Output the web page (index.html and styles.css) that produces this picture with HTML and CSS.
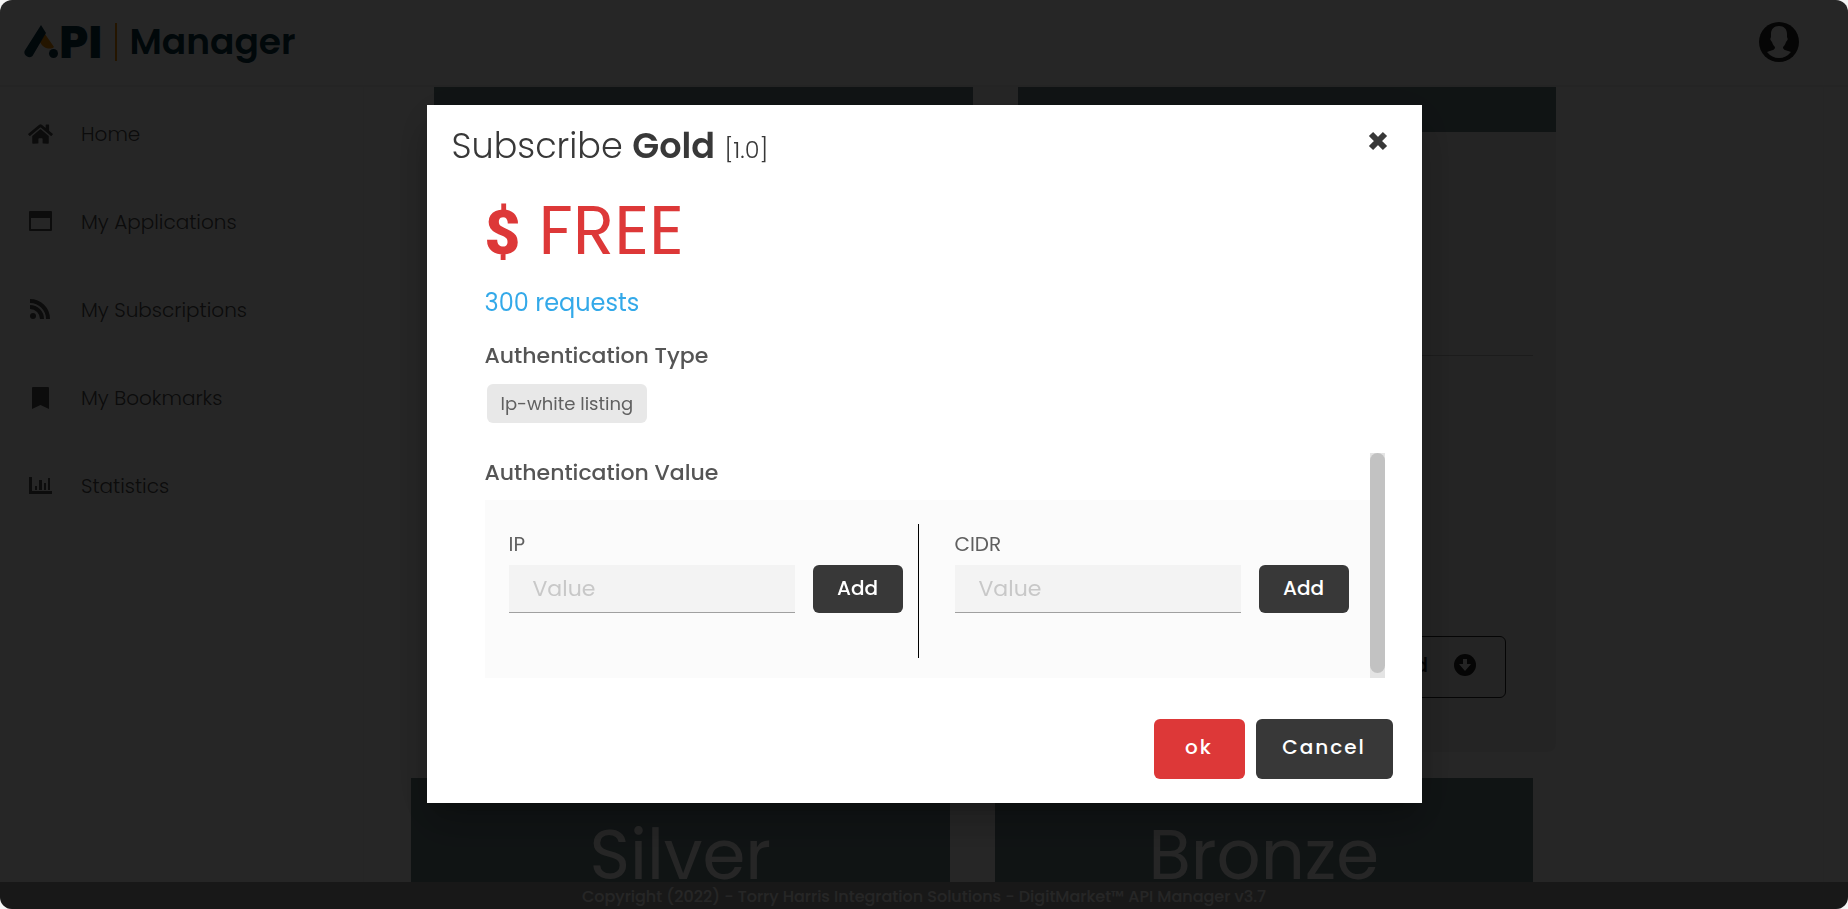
FILE: index.html
```
<!DOCTYPE html>
<html lang="en">
<head>
    <meta charset="UTF-8">
    <meta name="viewport" content="width=device-width, initial-scale=1.0">
    <title>API Manager</title>
    <link rel="stylesheet" href="styles.css">
</head>
<body>
    <div class="page">
        <header class="topbar">
            <a class="logo" href="#">
                <svg class="logo-mark" viewBox="0 0 36 36">
                    <path d="M22 10 L31 23 C28 26 20 25 17 18 Z" fill="#f08a00"/>
                    <path d="M18 1 L23 9 L9.500 32 A5 5 0 0 1 1.500 27 Z" fill="#0c3548"/>
                    <circle cx="30.500" cy="29.500" r="4.500" fill="#0c3548"/>
                </svg>
                <span class="logo-api">PI</span>
                <span class="logo-line"></span>
                <span class="logo-name">Manager</span>
            </a>
            <a class="avatar" href="#" aria-label="Account">
                <svg viewBox="0 0 40 40">
                    <circle cx="20" cy="20" r="20" fill="#222"/>
                    <path d="M20 4 C25 4 28 7 28 12 V15 C29 17 29 18 27 20 C26 23 25 24 24 25 C24 28 26 28 32 30 Q27 36 20 36 Q13 36 8 30 C14 28 16 28 16 25 C15 24 14 23 13 20 C11 18 11 17 12 15 V12 C12 7 15 4 20 4 Z" fill="#fff"/>
                </svg>
            </a>
        </header>

        <div class="middle">
            <nav class="sidebar">
                <a href="#">
                    <svg viewBox="0 0 576 512"><path d="M280.37 148.26L96 300.11V464a16 16 0 0 0 16 16l112.06-.29a16 16 0 0 0 15.92-16V368a16 16 0 0 1 16-16h64a16 16 0 0 1 16 16v95.64a16 16 0 0 0 16 16.05L464 480a16 16 0 0 0 16-16V300L295.67 148.26a12.19 12.19 0 0 0-15.3 0zM571.6 251.47L488 182.56V44.05a12 12 0 0 0-12-12h-56a12 12 0 0 0-12 12v72.61L318.47 43a48 48 0 0 0-61 0L4.34 251.47a12 12 0 0 0-1.6 16.9l25.5 31A12 12 0 0 0 45.15 301l235.22-193.74a12.19 12.19 0 0 1 15.3 0L530.9 301a12 12 0 0 0 16.9-1.6l25.5-31a12 12 0 0 0-1.7-16.93z"/></svg>
                    <span>Home</span>
                </a>
                <a href="#">
                    <svg viewBox="0 0 25 22"><path fill-rule="evenodd" d="M2 0 H23 Q24 0 24 1 V19 Q24 20 23 20 H2 Q1 20 1 19 V1 Q1 0 2 0 Z M3 7 V18 H22 V7 Z"/></svg>
                    <span>My Applications</span>
                </a>
                <a href="#">
                    <svg viewBox="0 0 25 22"><circle cx="5" cy="17" r="3"/><path d="M2 8 A12 12 0 0 1 14 20 M2 2 A18 18 0 0 1 20 20" fill="none" stroke="#505050" stroke-width="4"/></svg>
                    <span>My Subscriptions</span>
                </a>
                <a href="#">
                    <svg viewBox="0 0 25 22"><path d="M5 0 H20 Q21 0 21 1 V22 L12.500 18 L4 22 V1 Q4 0 5 0 Z"/></svg>
                    <span>My Bookmarks</span>
                </a>
                <a href="#">
                    <svg viewBox="0 0 25 22"><path d="M1 2 H4 V16 H24 V19 H1 Z M7 11 H9 V15 H7 Z M11 5 H14 V15 H11 Z M16 8 H18 V15 H16 Z M20 3 H22 V15 H20 Z"/></svg>
                    <span>Statistics</span>
                </a>
            </nav>

            <main class="plans">
                <div class="plan-row first">
                    <section class="plan">
                        <div class="plan-head"></div>
                        <div class="plan-body"><hr></div>
                    </section>
                    <section class="plan">
                        <div class="plan-head"></div>
                        <div class="plan-body">
                            <hr>
                            <button class="download" type="button">Download
                                <svg viewBox="0 0 22 22"><circle cx="11" cy="11" r="11" fill="#222"/><path d="M9 5 H13 V10 H17 L11 17 L5 10 H9 Z" fill="#f2f2f2"/></svg>
                            </button>
                        </div>
                    </section>
                </div>
                <div class="plan-row second">
                    <section class="plan">
                        <h2 class="plan-title">Silver</h2>
                    </section>
                    <section class="plan">
                        <h2 class="plan-title">Bronze</h2>
                    </section>
                </div>
            </main>
        </div>

        <footer class="footer">Copyright (2022) - Torry Harris Integration Solutions - DigitMarket™ API Manager v3.7</footer>
    </div>

    <div class="overlay">
        <div class="modal" role="dialog" aria-labelledby="modal-title">
            <div class="modal-head">
                <h1 id="modal-title">Subscribe <b>Gold</b> <small>[1.0]</small></h1>
                <button class="close" type="button" aria-label="Close">
                    <svg viewBox="0 0 20 20"><path d="M3 3 L17 17 M17 3 L3 17" stroke="#383838" stroke-width="6"/></svg>
                </button>
            </div>

            <div class="modal-body">
                <div class="price"><b>$</b> FREE</div>
                <div class="requests">300 requests</div>
                <h3>Authentication Type</h3>
                <span class="chip">Ip-white listing</span>

                <div class="scroll">
                    <div class="scroll-content">
                        <h3>Authentication Value</h3>
                        <div class="values">
                            <div class="field">
                                <label for="ip">IP</label>
                                <div class="field-row">
                                    <input type="text" id="ip" placeholder="Value">
                                    <button class="btn add" type="button">Add</button>
                                </div>
                            </div>
                            <div class="field">
                                <label for="cidr">CIDR</label>
                                <div class="field-row">
                                    <input type="text" id="cidr" placeholder="Value">
                                    <button class="btn add" type="button">Add</button>
                                </div>
                            </div>
                        </div>
                    </div>
                    <div class="track"><div class="thumb"></div></div>
                </div>
            </div>

            <div class="modal-foot">
                <button class="btn ok" type="button">ok</button>
                <button class="btn cancel" type="button">Cancel</button>
            </div>
        </div>
    </div>
</body>
</html>
```
FILE: styles.css
```
*{
    box-sizing: border-box;
}
body{
    margin: 0;
    background-color: #f4f4f4;
    font-family: Poppins, Inter, "Open Sans", sans-serif;
    color: #383838;
}
h1, h2, h3{
    margin: 0;
    font-weight: 400;
}
button, input{
    font-family: inherit;
}
a{
    color: inherit;
    text-decoration: none;
}
.page{
    display: flex;
    flex-direction: column;
    height: 100vh;
    background-color: #fff;
    border-radius: 12px;
    overflow: hidden;
}

/* top bar */
.topbar{
    display: flex;
    justify-content: space-between;
    align-items: center;
    flex: none;
    height: 87px;
    padding: 0 49px 2px 23px;
    border-bottom: 2px solid #f0f0f0;
}
.logo{
    display: flex;
    align-items: center;
    color: #0c3548;
}
.logo-mark{
    width: 36px;
    height: 36px;
}
.logo-api{
    font-size: 46px;
    font-weight: 800;
    line-height: 40px;
}
.logo-line{
    width: 2px;
    height: 38px;
    margin: 0 12px 0 13px;
    background-color: #f08a00;
}
.logo-name{
    font-size: 36px;
    font-weight: 600;
    line-height: 40px;
}
.avatar svg{
    display: block;
    width: 40px;
    height: 40px;
}

.middle{
    display: flex;
    flex: 1;
    min-height: 0;
}

/* side menu */
.sidebar{
    flex: none;
    width: 364px;
    padding-top: 3px;
    border-right: 1px solid #f4f4f4;
}
.sidebar a{
    display: flex;
    align-items: center;
    gap: 28px;
    height: 88px;
    padding-left: 28px;
    font-size: 20px;
    font-weight: 300;
    color: #505050;
}
.sidebar svg{
    width: 25px;
    height: 22px;
    fill: #505050;
}

/* plans behind the dialog */
.plans{
    flex: 1;
    overflow: hidden;
    margin-right: 24px;
    border-right: 1px solid #f4f4f4;
}
.plan-row{
    display: grid;
    grid-template-columns: 1fr 1fr;
    gap: 45px;
}
.first{
    padding: 0 267px 26px 70px;
}
.second{
    padding: 0 290px 0 47px;
}
.plan{
    background-color: #f2f2f2;
    border-radius: 0 0 8px 8px;
}
.plan-head{
    height: 45px;
    background-color: #6e8688;
}
.plan-body{
    display: flex;
    flex-direction: column;
    height: 620px;
    padding: 223px 23px 54px;
}
.plan-body hr{
    width: 100%;
    margin: 0;
    border: 0;
    border-top: 1px solid #bbb;
}
.download{
    display: flex;
    align-items: center;
    align-self: flex-end;
    gap: 26px;
    height: 62px;
    margin: auto 27px 0 0;
    padding: 0 29px 4px;
    border: 1px solid #222;
    border-radius: 6px;
    background: none;
    color: #222;
    font-size: 20px;
    font-weight: 500;
}
.download svg{
    width: 22px;
    height: 22px;
}
.plan-title{
    height: 104px;
    padding-top: 52px;
    background-color: #6e8688;
    color: #fff;
    font-size: 69px;
    line-height: 50px;
    text-align: center;
}
.footer{
    flex: none;
    height: 27px;
    background-color: #9f9f9f;
    color: #fff;
    font-size: 16px;
    font-weight: 500;
    line-height: 29px;
    text-align: center;
}

/* dialog */
.overlay{
    position: fixed;
    inset: 0;
    display: flex;
    align-items: center;
    justify-content: center;
    padding-bottom: 2px;
    border-radius: 12px;
    background-color: rgba(0, 0, 0, 0.85);
}
.modal{
    width: 90%;
    max-width: 995px;
    background-color: #fff;
    box-shadow: 0 11px 15px -7px rgba(0,0,0,.2), 0 24px 38px 3px rgba(0,0,0,.14), 0 9px 46px 8px rgba(0,0,0,.12);
}
.modal-head{
    display: flex;
    justify-content: space-between;
    padding: 16px 34px 0 25px;
}
.modal-head h1{
    font-size: 35px;
    font-weight: 300;
    line-height: 50px;
}
.modal-head b{
    font-weight: 600;
}
.modal-head small{
    font-size: 24px;
}
.close{
    width: 20px;
    height: 20px;
    margin-top: 10px;
    padding: 0;
    border: 0;
    background: none;
}
.close svg{
    display: block;
}
.modal-body{
    padding: 16px 37px 0 58px;
}
.price{
    color: #dd3838;
    font-size: 68px;
    line-height: 80px;
}
.price b{
    font-family: Roboto, sans-serif;
    font-size: 62px;
    font-weight: 900;
}
.requests{
    padding: 10px 0 13px;
    color: #33a9e9;
    font-size: 24px;
    line-height: 40px;
}
.modal-body h3{
    color: #555;
    font-size: 22px;
    font-weight: 500;
    line-height: 40px;
}
.chip{
    display: block;
    width: fit-content;
    margin: 8px 2px 30px;
    padding: 0 14px;
    border-radius: 6px;
    background-color: #e8e8e8;
    color: #606060;
    font-size: 18px;
    line-height: 39px;
}
.scroll{
    display: flex;
    height: 225px;
}
.scroll-content{
    flex: 1;
}
.scroll-content h3{
    height: 47px;
}
.track{
    width: 15px;
    background-color: #e4e4e4;
}
.thumb{
    height: 98%;
    border-radius: 8px;
    background-color: #c2c2c2;
}
.values{
    display: grid;
    grid-template-columns: 409px 1fr;
    height: 178px;
    padding: 24px 21px 20px 24px;
    background-color: #fbfbfb;
}
.field + .field{
    padding-left: 36px;
    border-left: 1px solid #000;
}
.field label{
    display: block;
    padding: 2px 0;
    color: #606060;
    font-size: 20px;
    line-height: 37px;
}
.field-row{
    display: flex;
    gap: 18px;
}
.field input{
    width: 286px;
    height: 48px;
    padding: 0 24px;
    border: 0;
    border-bottom: 1px solid #a0a0a0;
    background-color: #f3f3f3;
    font-size: 22px;
}
.field input::placeholder{
    color: #c8c8c8;
}
.btn{
    padding: 0 0 2px;
    border: 0;
    border-radius: 6px;
    background-color: #383838;
    color: #fff;
    font-size: 20px;
    font-weight: 500;
}
.add{
    width: 90px;
    height: 48px;
}
.modal-foot{
    display: flex;
    justify-content: flex-end;
    gap: 11px;
    padding: 41px 29px 24px;
}
.ok, .cancel{
    height: 60px;
    padding-bottom: 4px;
    letter-spacing: 2px;
}
.ok{
    width: 91px;
    background-color: #dd3838;
}
.cancel{
    width: 137px;
}
```
